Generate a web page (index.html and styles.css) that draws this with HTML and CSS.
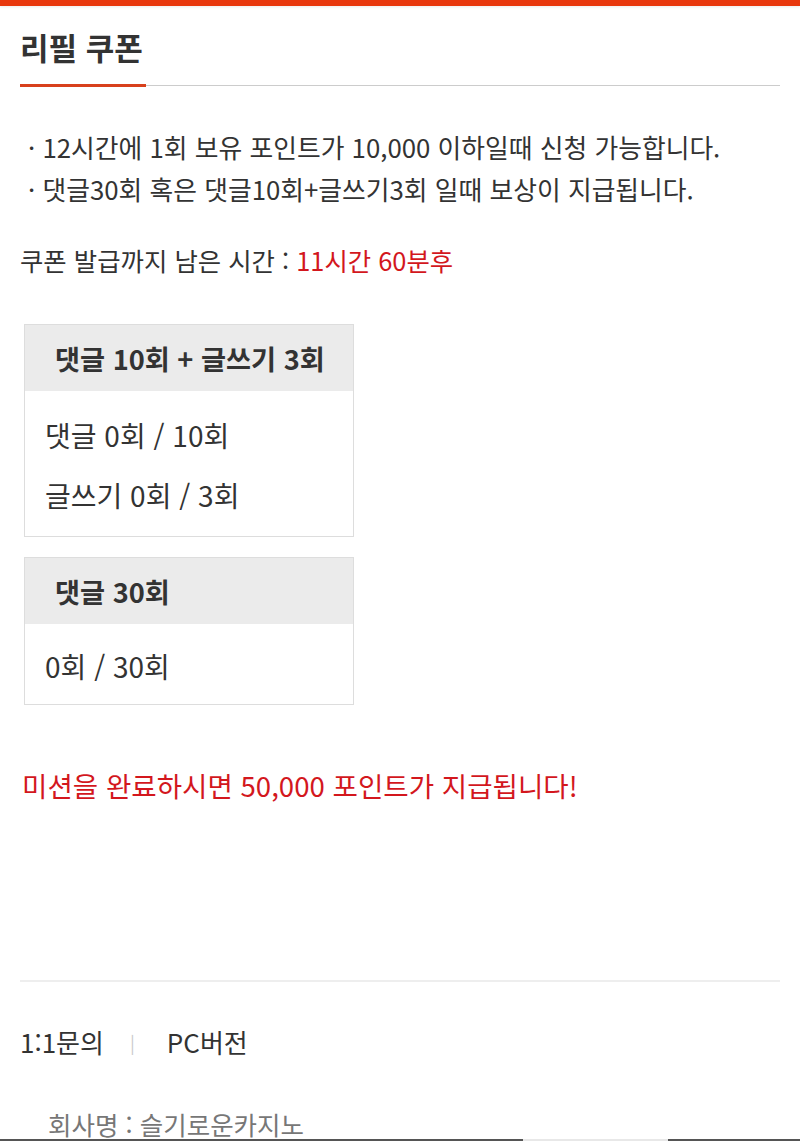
FILE: index.html
```html
<!DOCTYPE html>
<html lang="ko">
<head>
	<meta charset="UTF-8">
	<meta name="viewport" content="width=device-width, initial-scale=1.0">
	<title>리필 쿠폰</title>
	<link rel="stylesheet" href="styles.css">
</head>
<body>
	<div class="top-bar"></div>

	<div class="wrap">
		<!-- Page title -->
		<h2 class="page-title"><span>리필 쿠폰</span></h2>

		<ul class="notice">
			<li>· 12시간에 1회 보유 포인트가 10,000 이하일때 신청 가능합니다.</li>
			<li>· 댓글30회 혹은 댓글10회+글쓰기3회 일때 보상이 지급됩니다.</li>
		</ul>

		<p class="timer">쿠폰 발급까지 남은 시간 : <span class="red">11시간 60분후</span></p>

		<!-- Missions -->
		<div class="mission">
			<div class="mission-head">댓글 10회 + 글쓰기 3회</div>
			<div class="mission-body">
				<p>댓글 0회 / 10회</p>
				<p>글쓰기 0회 / 3회</p>
			</div>
		</div>

		<div class="mission">
			<div class="mission-head">댓글 30회</div>
			<div class="mission-body">
				<p>0회 / 30회</p>
			</div>
		</div>

		<p class="reward">미션을 완료하시면 50,000 포인트가 지급됩니다!</p>

		<!-- Footer -->
		<div class="footer">
			<div class="footer-links">
				<a href="#">1:1문의</a>
				<span class="sep">|</span>
				<a href="#">PC버전</a>
			</div>
			<p class="company">회사명 : 슬기로운카지노</p>
		</div>
	</div>

	<div class="bottom-nav"><span></span><span class="on"></span><span></span></div>
</body>
</html>
```

FILE: styles.css
```css
body {
	margin: 0;
	padding: 0;
	background-color: #fff;
	color: #333;
	font-family: "Noto Sans CJK KR", "Noto Sans", sans-serif;
}

.top-bar {
	height: 6px;
	background-color: #e8380d;
	box-shadow: 0 1px 3px rgba(0, 0, 0, 0.08);
}

.wrap {
	padding: 0 20px;
}

.page-title {
	margin: 18px 0 0;
	font-size: 31px;
	font-weight: bold;
	line-height: 46px;
	border-bottom: 1px solid #ccc;
}

.page-title span {
	display: inline-block;
	padding: 0 3px 14px 0;
	margin-bottom: -2px;
	border-bottom: 3px solid #d8401c;
}

.notice {
	list-style: none;
	margin: 40px 0 0;
	padding: 0 0 0 8px;
	font-size: 25.8px;
	line-height: 42px;
}

.timer {
	margin: 30px 0 0;
	font-size: 25.4px;
	line-height: 40px;
}

.red {
	color: #d3171d;
}

.mission {
	width: 328px;
	margin: 44px 0 0 4px;
	border: 1px solid #ddd;
}

.mission + .mission {
	margin-top: 20px;
}

.mission-head {
	height: 66px;
	line-height: 66px;
	padding-left: 30px;
	background-color: #ebebeb;
	font-size: 27.2px;
	font-weight: bold;
}

.mission-body {
	padding: 14px 20px 11px;
}

.mission + .mission .mission-body {
	padding: 12px 20px 8px;
}

.mission-body p {
	margin: 0;
	font-size: 28px;
	line-height: 60px;
}

.reward {
	margin: 60px 0 0 2px;
	font-size: 27.6px;
	line-height: 40px;
	color: #d3171d;
}

.footer {
	margin-top: 175px;
	border-top: 2px solid #eee;
}

.footer-links {
	display: flex;
	align-items: center;
	margin-top: 40px;
	font-size: 26px;
	line-height: 40px;
}

.footer-links a {
	color: #333;
	text-decoration: none;
}

.footer-links .sep {
	margin: 0 32px 0 26px;
	color: #ccc;
	font-size: 18px;
}

.company {
	margin: 42px 0 0 28px;
	font-size: 25.5px;
	line-height: 40px;
	color: #777;
}

.bottom-nav {
	position: fixed;
	left: 0;
	right: 0;
	bottom: 0;
	display: flex;
	height: 2px;
}

.bottom-nav span {
	flex: 523;
	background-color: #555;
}

.bottom-nav span.on {
	flex: 145;
	background-color: #e8e8e8;
}

.bottom-nav span:last-child {
	flex: 132;
}
```
